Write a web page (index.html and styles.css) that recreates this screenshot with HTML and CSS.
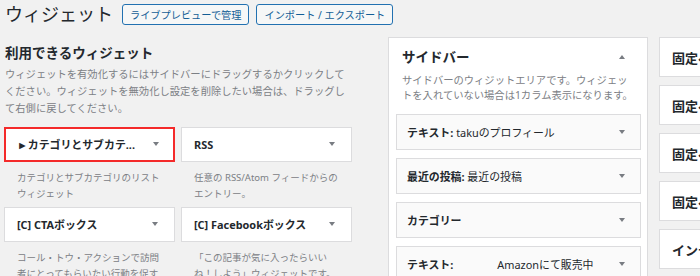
FILE: index.html
```html
<!DOCTYPE html>
<html lang="ja">
<head>
<meta charset="utf-8">
<title>ウィジェット</title>
<link rel="stylesheet" href="styles.css">
</head>
<body>
<div class="page">
  <header class="head">
    <h1 class="title">ウィジェット</h1>
    <a class="btn">ライブプレビューで管理</a>
    <a class="btn">インポート / エクスポート</a>
  </header>
  <main class="main">
    <section class="available">
      <h2 class="sec-title">利用できるウィジェット</h2>
      <p class="sec-desc">ウィジェットを有効化するにはサイドバーにドラッグするかクリックしてください。ウィジェットを無効化し設定を削除したい場合は、ドラッグして右側に戻してください。</p>
      <div class="widget-grid">
        <div class="widget">
          <div class="widget-top is-marked"><span class="widget-name">►カテゴリとサブカテ...</span><span class="arrow"></span></div>
          <p class="widget-desc">カテゴリとサブカテゴリのリストウィジェット</p>
        </div>
        <div class="widget">
          <div class="widget-top"><span class="widget-name">RSS</span><span class="arrow"></span></div>
          <p class="widget-desc">任意の RSS/Atom フィードからのエントリー。</p>
        </div>
        <div class="widget">
          <div class="widget-top"><span class="widget-name">[C] CTAボックス</span><span class="arrow"></span></div>
          <p class="widget-desc">コール・トウ・アクションで訪問者にとってもらいたい行動を促す</p>
        </div>
        <div class="widget">
          <div class="widget-top"><span class="widget-name">[C] Facebookボックス</span><span class="arrow"></span></div>
          <p class="widget-desc">「この記事が気に入ったらいいね！しよう」ウィジェットです。</p>
        </div>
      </div>
    </section>
    <section class="sidebar">
      <div class="sidebar-head">
        <h2 class="sidebar-title">サイドバー</h2>
        <span class="arrow arrow-up"></span>
      </div>
      <p class="sidebar-desc">サイドバーのウィジットエリアです。ウィジェットを入れていない場合は1カラム表示になります。</p>
      <div class="sidebar-widgets">
        <div class="sb-widget"><span class="widget-name">テキスト:<span class="in-title"> takuのプロフィール</span></span><span class="arrow"></span></div>
        <div class="sb-widget"><span class="widget-name">最近の投稿:<span class="in-title"> 最近の投稿</span></span><span class="arrow"></span></div>
        <div class="sb-widget"><span class="widget-name">カテゴリー</span><span class="arrow"></span></div>
        <div class="sb-widget"><span class="widget-name">テキスト:<span class="in-title gap">Amazonにて販売中</span></span><span class="arrow"></span></div>
      </div>
    </section>
    <div class="areas">
      <div class="area">固定ページ上部</div>
      <div class="area">固定ページ下部</div>
      <div class="area">固定ページサイド</div>
      <div class="area">固定ページ本文</div>
      <div class="area">インデックス上部</div>
    </div>
  </main>
</div>
</body>
</html>
```

FILE: styles.css
```css
html, body {
  margin: 0;
}
body {
  width: 700px;
  height: 276px;
  overflow: hidden;
  background: #f1f1f1;
  font-family: "Noto Sans", "Noto Sans CJK JP", sans-serif;
  color: #23282d;
}
.page {
  padding-top: 4px;
}
.head {
  display: flex;
  align-items: center;
  gap: 7px;
  height: 21px;
  padding-left: 5px;
}
.title {
  margin: 0;
  width: 110px;
  font-size: 18px;
  font-weight: 400;
  line-height: 21px;
  white-space: nowrap;
}
.btn {
  box-sizing: border-box;
  height: 21px;
  display: flex;
  align-items: center;
  padding: 0 7px;
  border: 1px solid #2271b1;
  border-radius: 3px;
  background: #f6f7f7;
  color: #135e96;
  font-size: 10.2px;
  white-space: nowrap;
}
.main {
  display: flex;
  align-items: flex-start;
  margin-top: 12px;
  padding-left: 4px;
}
.available {
  flex: none;
  width: 348px;
  padding-top: 7px;
}
.sec-title {
  margin: 0 0 0 1px;
  font-size: 13.5px;
  font-weight: 700;
  line-height: 18px;
}
.sec-desc {
  margin: 4px 0 0 1px;
  width: 346px;
  font-size: 10.3px;
  line-height: 17px;
  color: #7c8085;
}
.widget-grid {
  margin-top: 9.5px;
  display: grid;
  grid-template-columns: 171px 171px;
  column-gap: 6px;
  row-gap: 5px;
}
.widget-top {
  box-sizing: border-box;
  height: 35px;
  display: flex;
  align-items: center;
  justify-content: space-between;
  padding: 0 16px 0 12px;
  background: #fff;
  border: 1px solid #dcdcde;
}
.widget-top.is-marked {
  border: 2px solid #f42a2a;
  padding: 0 14px 0 11px;
}
.widget-name {
  font-size: 10.9px;
  font-weight: 700;
  white-space: nowrap;
}
.in-title {
  font-weight: 400;
}
.in-title.gap {
  margin-left: 44px;
}
.arrow {
  flex: none;
  width: 0;
  height: 0;
  border-left: 3px solid transparent;
  border-right: 3px solid transparent;
  border-top: 4px solid #787c82;
}
.arrow-up {
  border-top: 0;
  border-bottom: 4px solid #787c82;
}
.widget-desc {
  margin: 8px 0 0;
  padding: 0 12px 0 13px;
  font-size: 9.5px;
  line-height: 16px;
  color: #7c8085;
}
.sidebar {
  box-sizing: border-box;
  flex: none;
  width: 260px;
  height: 260px;
  margin-left: 36px;
  padding: 10px 6px 0 7px;
  background: #fff;
  border: 1px solid #dcdcde;
}
.sidebar-head {
  display: flex;
  align-items: center;
  justify-content: space-between;
  padding: 0 16px 0 6px;
}
.sidebar-title {
  margin: 0;
  font-size: 13.5px;
  font-weight: 700;
  line-height: 18px;
}
.sidebar-desc {
  margin: 6.5px 0 0 6px;
  width: 235px;
  font-size: 10.3px;
  line-height: 15px;
  color: #7c8085;
}
.sidebar-widgets {
  margin-top: 11.5px;
  display: flex;
  flex-direction: column;
  gap: 8px;
}
.sb-widget {
  box-sizing: border-box;
  height: 36px;
  display: flex;
  align-items: center;
  justify-content: space-between;
  padding: 0 15px 0 10px;
  background: #fafafa;
  border: 1px solid #dcdcde;
}
.areas {
  flex: none;
  width: 200px;
  margin-left: 11px;
  display: flex;
  flex-direction: column;
  gap: 8px;
}
.area {
  box-sizing: border-box;
  height: 40px;
  display: flex;
  align-items: center;
  padding: 0 12px;
  background: #fff;
  border: 1px solid #dcdcde;
  font-size: 13px;
  font-weight: 700;
  white-space: nowrap;
}
```
